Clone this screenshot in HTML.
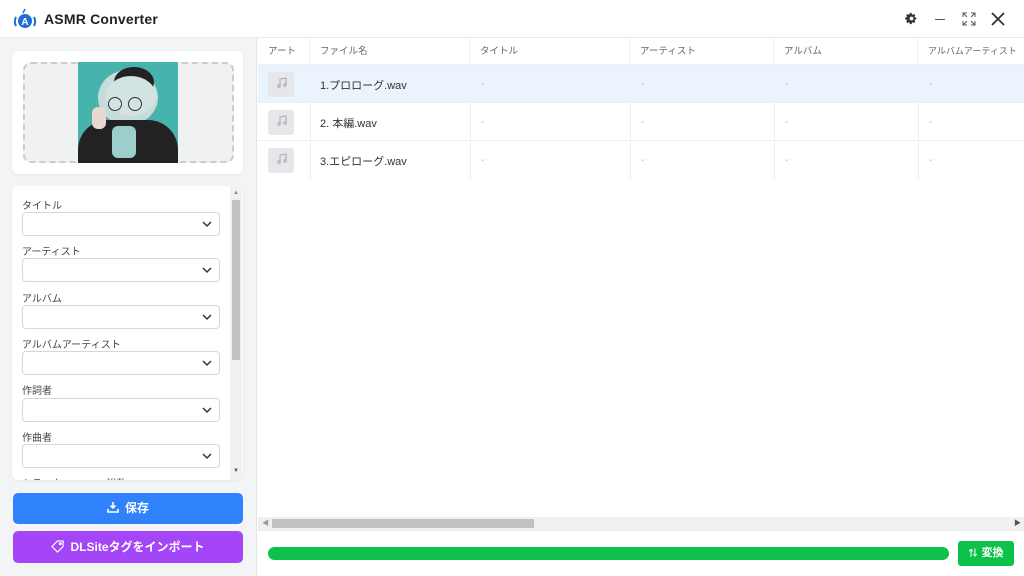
<!DOCTYPE html>
<html><head><meta charset="utf-8"><style>
*{box-sizing:border-box;margin:0;padding:0}
body{width:1024px;height:576px;overflow:hidden;background:#fff;font-family:"Liberation Sans","Noto Sans CJK JP",sans-serif;position:relative;color:#333}
.abs{position:absolute}
.title{left:0;top:0;width:1024px;height:38px;background:#fff;border-bottom:1px solid #e8eaee}
.left{left:0;top:38px;width:257px;height:538px;background:#f3f4f6;border-right:1px solid #e3e5e8}
.card{background:#fff;border-radius:6px;box-shadow:0 1px 3px rgba(0,0,0,.06)}
.lbl{font-size:10px;color:#444;left:22px}
.inp{left:22px;width:198px;height:24px;border:1px solid #d4d7dc;border-radius:4px;background:#fff}
.inp svg{position:absolute;right:7px;top:8px}
.th{top:38px;height:27px;font-size:9.5px;color:#666;line-height:27px;border-right:1px solid #eceef1;padding-left:10px;white-space:nowrap;overflow:hidden}
.td{font-size:11px;color:#333;padding-left:10px}
.row{left:258px;width:766px;height:38px;border-bottom:1px solid #eef0f2}
.art{left:10px;top:7px;width:26px;height:25px;background:#e5e7eb;border-radius:3px}
.dash{color:#bbb;font-size:10px}
</style></head><body>
<div class="abs title">
 <svg class="abs" style="left:13px;top:8px" width="24" height="22" viewBox="0 0 24 22"><path d="M12 1 l-2 4" stroke="#1e6fd9" stroke-width="1.5" fill="none"/><circle cx="12" cy="13" r="7" fill="#1e6fd9"/><text x="12" y="17" font-size="10" font-weight="bold" fill="#fff" text-anchor="middle" font-family="Liberation Sans">A</text><path d="M3 9 a10 10 0 0 0 0 9 M21 9 a10 10 0 0 1 0 9" stroke="#1e6fd9" stroke-width="2" fill="none"/></svg>
 <div class="abs" style="left:44px;top:11px;font-size:14px;color:#222;font-weight:bold;letter-spacing:0.2px">ASMR Converter</div>
 <svg class="abs" style="left:905px;top:12px" width="13" height="13" viewBox="0 0 24 24"><path fill="#333" d="M12 8a4 4 0 1 0 0 8a4 4 0 0 0 0-8zm9 5.5v-3l-2.6-.6a7 7 0 0 0-.8-1.9l1.4-2.3-2.1-2.1-2.3 1.4a7 7 0 0 0-1.9-.8L12.1 1.6h-3l-.6 2.6a7 7 0 0 0-1.9.8L4.3 3.6 2.2 5.7l1.4 2.3a7 7 0 0 0-.8 1.9L.2 10.5v3l2.6.6a7 7 0 0 0 .8 1.9l-1.4 2.3 2.1 2.1 2.3-1.4a7 7 0 0 0 1.9.8l.6 2.6h3l.6-2.6a7 7 0 0 0 1.9-.8l2.3 1.4 2.1-2.1-1.4-2.3a7 7 0 0 0 .8-1.9z"/><circle cx="12" cy="12" r="3.5" fill="#fff"/></svg>
 <div class="abs" style="left:935px;top:19px;width:10px;height:1px;background:#555"></div>
 <svg class="abs" style="left:962px;top:12px" width="14" height="14" viewBox="0 0 14 14" fill="none" stroke="#555" stroke-width="1"><path d="M1 5V1h4M9 1h4v4M13 9v4H9M5 13H1V9M1 1l4 4M13 1L9 5M13 13L9 9M1 13l4-4"/></svg>
 <svg class="abs" style="left:991px;top:12px" width="14" height="14" viewBox="0 0 14 14" stroke="#333" stroke-width="1.8"><path d="M1 1L13 13M13 1L1 13"/></svg>
</div>
<div class="abs left">
 <div class="abs card" style="left:12px;top:13px;width:231px;height:123px">
  <div class="abs" style="left:11px;top:11px;width:211px;height:101px;border:2px dashed #c9ccd1;border-radius:8px;background:#f0f1f3"></div>
  <div class="abs" style="left:66px;top:11px;width:100px;height:101px;background:#47b3ad;overflow:hidden">
   <div class="abs" style="left:20px;top:8px;width:60px;height:55px;border-radius:50%;background:#c6dcda"></div>
   <div class="abs" style="left:36px;top:5px;width:40px;height:30px;border-radius:50%;background:#222"></div>
   <div class="abs" style="left:28px;top:14px;width:50px;height:40px;border-radius:50%;background:#d2e3e1"></div>
   <div class="abs" style="left:0;top:58px;width:100px;height:50px;border-radius:30px 30px 0 0;background:#222"></div>
   <div class="abs" style="left:30px;top:35px;width:14px;height:14px;border-radius:50%;border:1.5px solid #333"></div>
   <div class="abs" style="left:50px;top:35px;width:14px;height:14px;border-radius:50%;border:1.5px solid #333"></div>
   <div class="abs" style="left:34px;top:64px;width:24px;height:32px;border-radius:6px;background:#9ccfcb"></div>
   <div class="abs" style="left:14px;top:45px;width:14px;height:22px;border-radius:6px;background:#e8d8d0"></div>
  </div>
 </div>
 <div class="abs card" style="left:12px;top:148px;width:231px;height:294px;overflow:hidden">
  <div class="abs" style="left:218px;top:0;width:12px;height:294px;background:#f1f1f1"></div>
  <div class="abs" style="left:220px;top:14px;width:8px;height:160px;background:#c1c1c1"></div>
  <div class="abs" style="left:221px;top:4px;font-size:6px;color:#888">▲</div>
  <div class="abs" style="left:221px;top:282px;font-size:6px;color:#555">▼</div>
 </div>
 <div class="abs lbl" style="top:159px">タイトル</div>
 <div class="abs inp" style="top:174px"><svg width="10" height="7" viewBox="0 0 10 7"><path d="M1 1l4 4 4-4" stroke="#333" stroke-width="1.5" fill="none"/></svg></div>
 <div class="abs lbl" style="top:205px">アーティスト</div>
 <div class="abs inp" style="top:220px"><svg width="10" height="7" viewBox="0 0 10 7"><path d="M1 1l4 4 4-4" stroke="#333" stroke-width="1.5" fill="none"/></svg></div>
 <div class="abs lbl" style="top:252px">アルバム</div>
 <div class="abs inp" style="top:267px"><svg width="10" height="7" viewBox="0 0 10 7"><path d="M1 1l4 4 4-4" stroke="#333" stroke-width="1.5" fill="none"/></svg></div>
 <div class="abs lbl" style="top:298px">アルバムアーティスト</div>
 <div class="abs inp" style="top:313px"><svg width="10" height="7" viewBox="0 0 10 7"><path d="M1 1l4 4 4-4" stroke="#333" stroke-width="1.5" fill="none"/></svg></div>
 <div class="abs lbl" style="top:344px">作詞者</div>
 <div class="abs inp" style="top:360px"><svg width="10" height="7" viewBox="0 0 10 7"><path d="M1 1l4 4 4-4" stroke="#333" stroke-width="1.5" fill="none"/></svg></div>
 <div class="abs lbl" style="top:391px">作曲者</div>
 <div class="abs inp" style="top:406px"><svg width="10" height="7" viewBox="0 0 10 7"><path d="M1 1l4 4 4-4" stroke="#333" stroke-width="1.5" fill="none"/></svg></div>
 <div class="abs lbl" style="top:437px;height:5px;overflow:hidden">トラック&nbsp;&nbsp;&nbsp;&nbsp;&nbsp;&nbsp;&nbsp;&nbsp;&nbsp;&nbsp;&nbsp;&nbsp;&nbsp;&nbsp;&nbsp;&nbsp;総数</div>
 <div class="abs" style="left:13px;top:455px;width:230px;height:31px;background:#2f82fb;border-radius:5px;color:#fff;font-size:12px;font-weight:bold;text-align:center;line-height:31px">
  <svg width="12" height="12" viewBox="0 0 12 12" style="vertical-align:-1px;margin-right:6px" fill="none" stroke="#fff" stroke-width="1.6"><path d="M6 1v6M3.5 4.5L6 7l2.5-2.5M1 8v3h10V8"/></svg>保存</div>
 <div class="abs" style="left:13px;top:493px;width:230px;height:32px;background:#a445f7;border-radius:5px;color:#fff;font-size:12px;font-weight:bold;text-align:center;line-height:32px">
  <svg width="13" height="13" viewBox="0 0 14 14" style="vertical-align:-2px;margin-right:6px" fill="none" stroke="#fff" stroke-width="1.3"><path d="M1 7L7 1h6v6l-6 6z"/><circle cx="10" cy="4" r="1"/></svg>DLSiteタグをインポート</div>
</div>
<div class="abs" style="left:258px;top:38px;width:766px;height:27px;border-bottom:1px solid #eceef1"></div>
<div class="abs th" style="left:258px;width:52px">アート</div>
<div class="abs th" style="left:310px;width:160px">ファイル名</div>
<div class="abs th" style="left:470px;width:160px">タイトル</div>
<div class="abs th" style="left:630px;width:144px">アーティスト</div>
<div class="abs th" style="left:774px;width:144px">アルバム</div>
<div class="abs th" style="left:918px;width:106px;border:none;font-size:9px">アルバムアーティスト</div>
<div class="abs" style="left:310px;top:65px;width:1px;height:114px;background:#eceef1"></div>
<div class="abs" style="left:470px;top:65px;width:1px;height:114px;background:#eceef1"></div>
<div class="abs" style="left:630px;top:65px;width:1px;height:114px;background:#eceef1"></div>
<div class="abs" style="left:774px;top:65px;width:1px;height:114px;background:#eceef1"></div>
<div class="abs" style="left:918px;top:65px;width:1px;height:114px;background:#eceef1"></div>
<div class="abs row" style="top:65px;background:#ebf3fd"><div class="abs art"></div><div class="abs td" style="left:52px;top:12px">1.プロローグ.wav</div></div>
<div class="abs row" style="top:103px"><div class="abs art"></div><div class="abs td" style="left:52px;top:12px">2. 本編.wav</div></div>
<div class="abs row" style="top:141px;border:none"><div class="abs art"></div><div class="abs td" style="left:52px;top:12px">3.エピローグ.wav</div></div>
<svg class="abs" style="left:276px;top:77px" width="12" height="12" viewBox="0 0 12 12" fill="none" stroke="#aaa"><path d="M4 9V2l6-1v7"/><circle cx="3" cy="9" r="1.2"/><circle cx="9" cy="8" r="1.2"/></svg>
<svg class="abs" style="left:276px;top:115px" width="12" height="12" viewBox="0 0 12 12" fill="none" stroke="#aaa"><path d="M4 9V2l6-1v7"/><circle cx="3" cy="9" r="1.2"/><circle cx="9" cy="8" r="1.2"/></svg>
<svg class="abs" style="left:276px;top:153px" width="12" height="12" viewBox="0 0 12 12" fill="none" stroke="#aaa"><path d="M4 9V2l6-1v7"/><circle cx="3" cy="9" r="1.2"/><circle cx="9" cy="8" r="1.2"/></svg>
<div class="abs dash" style="left:481px;top:79px">-</div><div class="abs dash" style="left:641px;top:79px">-</div><div class="abs dash" style="left:785px;top:79px">-</div><div class="abs dash" style="left:929px;top:79px">-</div>
<div class="abs dash" style="left:481px;top:117px">-</div><div class="abs dash" style="left:641px;top:117px">-</div><div class="abs dash" style="left:785px;top:117px">-</div><div class="abs dash" style="left:929px;top:117px">-</div>
<div class="abs dash" style="left:481px;top:155px">-</div><div class="abs dash" style="left:641px;top:155px">-</div><div class="abs dash" style="left:785px;top:155px">-</div><div class="abs dash" style="left:929px;top:155px">-</div>
<div class="abs" style="left:258px;top:517px;width:766px;height:13px;background:#f1f1f1"></div>
<div class="abs" style="left:272px;top:519px;width:262px;height:9px;background:#c1c1c1"></div>
<div class="abs" style="left:262px;top:518px;font-size:7px;color:#999">◀</div>
<div class="abs" style="left:1014px;top:518px;font-size:7px;color:#555">▶</div>
<div class="abs" style="left:258px;top:530px;width:766px;height:1px;background:#e8eaee"></div>
<div class="abs" style="left:268px;top:547px;width:681px;height:13px;background:#0dc24b;border-radius:7px"></div>
<div class="abs" style="left:958px;top:541px;width:56px;height:25px;background:#0dc24b;border-radius:3px;color:#fff;font-size:11px;font-weight:bold;line-height:25px;text-align:center"><span style="font-size:9px;margin-right:4px">⇅</span>変換</div>
</body></html>
